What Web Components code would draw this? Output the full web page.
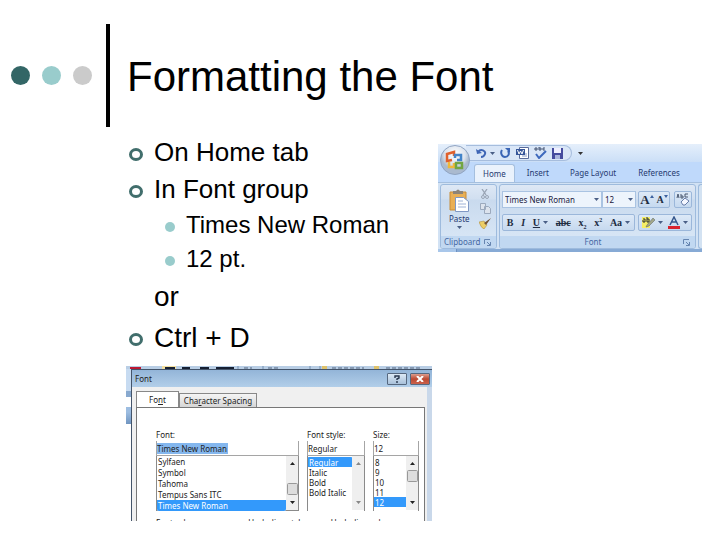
<!DOCTYPE html>
<html lang="en">
<head>
<meta charset="utf-8">
<meta name="viewport" content="width=device-width, initial-scale=1">
<title>Formatting the Font</title>
<style>
	body {
		margin: 0;
		background: #fff;
		color: #000;
		font-family: "Liberation Sans", Arial, sans-serif;
	}
	main {
		display: grid;
		grid-template-columns: 306fr 264fr;
		gap: 6px;
		align-items: start;
		padding: 7px 18px 16px 126px;
	}
	font-ribbon {
		margin-top: 10px;
	}
	font-dialog {
		margin-top: 8px;
	}
</style>
</head>
<body>
<slide-title>Formatting the Font</slide-title>
<main>
	<div>
		<outline-item>On Home tab</outline-item>
		<outline-item>In Font group</outline-item>
		<outline-item level="2">Times New Roman</outline-item>
		<outline-item level="2">12 pt.</outline-item>
		<outline-item level="large" plain>or</outline-item>
		<outline-item level="large">Ctrl + D</outline-item>
		<font-dialog>
			<list-field slot="fields" label="Font:" value="Times New Roman" options="Sylfaen|Symbol|Tahoma|Tempus Sans ITC|Times New Roman" selected="Times New Roman" thumb="27" highlight row="11"></list-field>
			<list-field slot="fields" label="Font style:" value="Regular" options="Regular|Italic|Bold|Bold Italic" selected="Regular" row="10"></list-field>
			<list-field slot="fields" label="Size:" value="12" options="8|9|10|11|12" selected="12" thumb="14" row="10"></list-field>
		</font-dialog>
	</div>
	<font-ribbon></font-ribbon>
</main>

<script>
const attach = (el, css, html) => {
	const template = document.createElement("template");
	template.innerHTML = `<style>* { box-sizing: border-box; } ${css}</style>${html}`;
	el.attachShadow({ mode: "open" }).appendChild(template.content.cloneNode(true));
};

const arrow = (color = "#4a5f86") => `<svg width="5" height="3" viewBox="0 0 5 3" aria-hidden="true"><path d="M0 0h5L2.500 3z" fill="${color}"/></svg>`;

customElements.define("slide-title", class extends HTMLElement {
	constructor() {
		super();
		attach(this, /*css*/ `
			:host {
				display: flex;
				align-items: center;
				padding: 24px 18px 0 11px;
			}
			.dots {
				display: flex;
				gap: 12px;
				width: 95px;
			}
			i {
				width: 19px;
				height: 19px;
				border-radius: 50%;
				background: #336666;
			}
			i:nth-child(2) { background: #99cccc; }
			i:nth-child(3) { background: #cbcbcb; }
			h1 {
				flex: 1;
				margin: 0;
				padding: 29px 0 26px 17px;
				border-left: 4px solid #000;
				font-size: 42px;
				font-weight: normal;
				line-height: 48px;
			}
		`, /*html*/ `
			<div class="dots"><i></i><i></i><i></i></div>
			<h1><slot></slot></h1>
		`);
	}
});

customElements.define("outline-item", class extends HTMLElement {
	constructor() {
		super();
		attach(this, /*css*/ `
			:host {
				display: flex;
				align-items: center;
				padding-left: 3px;
				font-size: 26px;
				line-height: 37px;
			}
			:host([level="2"]) {
				padding-left: 39px;
				font-size: 24px;
				line-height: 34px;
			}
			:host([level="large"]) {
				font-size: 28px;
				line-height: 41px;
			}
			i {
				width: 14px;
				height: 13px;
				margin: 3px 11px 0 0;
				border: 3px solid #416e6c;
				border-radius: 50%;
			}
			:host([level="2"]) i {
				width: 10px;
				height: 10px;
				border: 0;
				background: #99cccc;
			}
			:host([plain]) i { visibility: hidden; }
		`, `<i></i><span><slot></slot></span>`);
	}
});

/* editable value on top, list of choices below */
customElements.define("list-field", class extends HTMLElement {
	connectedCallback() {
		const label = this.getAttribute("label");
		const selected = this.getAttribute("selected");
		const options = this.getAttribute("options").split("|");
		const thumb = this.getAttribute("thumb");
		attach(this, /*css*/ `
			:host {
				display: block;
				min-width: 0;
			}
			label {
				display: block;
				line-height: 12px;
			}
			input {
				display: block;
				width: 100%;
				height: 15px;
				padding: 0;
				border: solid #a5a5a5;
				border-width: 0 1px 1px;
				font: inherit;
				color: inherit;
				background: #fff;
			}
			:host([highlight]) input {
				background: linear-gradient(#84b7ee, #84b7ee) no-repeat 0 2px / 71px 11px;
			}
			.list {
				display: flex;
				height: 55px;
				border: solid #8a8a8a;
				border-width: 0 1px;
			}
			:host([highlight]) .list { border-bottom-width: 1px; }
			select {
				flex: 1;
				min-width: 0;
				height: 55px;
				padding: 1px 0 0;
				border: 0;
				outline: 0;
				background: #fff;
				font: inherit;
				overflow: hidden;
			}
			option {
				min-height: 0;
				height: ${this.getAttribute("row")}px;
				padding: 0 0 0 1px;
				line-height: ${this.getAttribute("row")}px;
				color: #222;
			}
			option:checked {
				background: linear-gradient(#3399fb, #3399fb);
				-webkit-text-fill-color: #fff;
			}
			svg { display: block; flex: none; }
		`, /*html*/ `
			<label for="value">${label}</label>
			<input id="value" value="${this.getAttribute("value")}">
			<div class="list">
				<select size="5" aria-label="${label}">
					${options.map(o => `<option${o === selected ? " selected" : ""}>${o}</option>`).join("")}
				</select>
				<svg width="12" height="54" aria-hidden="true">
					<rect width="12" height="54" fill="#efefef"/>
					<path d="M4 9h5L6.500 6zM4 45h5L6.500 48z" fill="${thumb ? "#222" : "#888"}"/>
					${thumb ? `<rect x="1.500" y="${thumb}.500" width="10" height="11" rx="1" fill="#ddd" stroke="#999"/>` : ""}
				</svg>
			</div>
		`);
	}
});

customElements.define("font-dialog", class extends HTMLElement {
	constructor() {
		super();
		attach(this, /*css*/ `
			:host {
				display: grid;
				grid-template-columns: 5px 1fr;
				overflow: hidden;
				font: 8px/10px "Noto Sans", Tahoma, sans-serif;
				color: #222;
			}
			.strip {
				grid-column: 1 / 3;
				display: block;
				width: 100%;
				height: 3px;
			}
			.side {
				height: 55px;
				background: linear-gradient(#c7dbf1 0 22px, #88a9cf 22px 28px, #fff 28px 38px, #9dbde1 38px 43px, #7095c0);
			}
			.window {
				border: solid #44546a;
				border-width: 1px 0 0 1px;
				background: #f0f0f0;
			}
			header {
				display: flex;
				align-items: center;
				gap: 3px;
				height: 17px;
				padding: 0 2px 0 3px;
				background: linear-gradient(#93b5d8, #b2cee9);
			}
			h2 {
				flex: 1;
				margin: 0;
				font: inherit;
			}
			header button {
				width: 20px;
				height: 12px;
				padding: 0;
				border: 1px solid #56687f;
				border-radius: 1px;
				background: linear-gradient(#dce9f5, #a9c1da);
			}
			header .close { background: linear-gradient(#dc9d8e, #bd4932 50%, #c9614c); }
			header svg { display: block; margin: auto; }
			.inner {
				margin-right: 7px;
				box-shadow: 2px 0 #f0f0f0, 7px 0 #c9d8ea;
			}
			nav {
				display: flex;
				align-items: flex-end;
				height: 20px;
				padding-left: 4px;
			}
			nav button {
				height: 14px;
				padding: 0 4px;
				border: 1px solid #888;
				border-bottom: 0;
				background: linear-gradient(#f5f5f5, #d6d6d6);
				font: inherit;
				color: inherit;
				white-space: nowrap;
			}
			nav .current {
				height: 16px;
				padding: 0 12px;
				background: #fff;
			}
			.panel {
				margin-left: 4px;
				padding: 21px 5px 0 19px;
				border: solid #777;
				border-width: 1px 1px 0;
				background: #fff;
			}
			.fields {
				display: grid;
				grid-template-columns: 143fr 58fr 46fr;
				gap: 8px;
			}
			.more {
				display: grid;
				grid-template-columns: 92fr 82fr 88fr;
				height: 3px;
				margin-top: 7px;
				overflow: hidden;
				white-space: nowrap;
			}
		`, /*html*/ `
			<svg class="strip" viewBox="0 0 306 3" preserveAspectRatio="none" aria-hidden="true">
				<path d="M0 0h306v3H0z" fill="#b9cee5"/>
				<path d="M4 1h11v2H4z" fill="#bd1832"/>
				<path d="M36 0h14v3H36z" fill="#f2dfa0"/>
				<path d="M39 2h10M56 2h8M74 2h9M90 2h18" stroke="#172033" stroke-width="2"/>
				<path d="M112 0v3M137 0v3M184 0v3M194 0v3" stroke="#7590b1"/>
				<path d="M118 2h8M142 2h10M206 2h32M260 2h36" stroke="#53657f" stroke-dasharray="4 2"/>
				<path d="M196 0h5v3h-5zM248 0h5v3h-5z" fill="#dfc26a"/>
			</svg>
			<div class="side"></div>
			<section class="window">
				<header>
					<h2>Font</h2>
					<button aria-label="Help"><svg width="8" height="8" viewBox="0 0 8 8"><path d="M2 3V1h4v2L4 4v1M4 6v2" fill="none" stroke="#27364d" stroke-width="1.400"/></svg></button>
					<button class="close" aria-label="Close"><svg width="8" height="6" viewBox="0 0 8 6"><path d="M1 0l6 6M7 0L1 6" stroke="#fff" stroke-width="2"/></svg></button>
				</header>
				<div class="inner">
					<nav>
						<button class="current">Fo<u>n</u>t</button>
						<button>Cha<u>r</u>acter Spacing</button>
					</nav>
					<div class="panel">
						<div class="fields"><slot name="fields"></slot></div>
						<div class="more"><span>Font color:</span><span>Underline style:</span><span>Underline color:</span></div>
					</div>
				</div>
			</section>
		`);
	}
});

customElements.define("ribbon-group", class extends HTMLElement {
	constructor() {
		super();
		attach(this, /*css*/ `
			:host {
				display: flex;
				flex-direction: column;
				height: 65px;
				border: 1px solid #9ebbdd;
				border-radius: 3px;
				background: linear-gradient(#dee8f5, #d1dff0 14px, #c9daee 15px, #dbe9f7);
				overflow: hidden;
			}
			.content { flex: 1; }
			footer {
				display: flex;
				align-items: center;
				height: 12px;
				padding: 0 5px 0 3px;
				background: #c1d8f1;
				color: #4668a3;
				line-height: 12px;
			}
			span { flex: 1; }
			:host([centered]) span { text-align: center; }
			button {
				display: flex;
				padding: 0;
				border: 0;
				background: none;
			}
		`, /*html*/ `
			<div class="content"><slot></slot></div>
			<footer>
				<span>${this.getAttribute("label")}</span>
				<button aria-label="Open"><svg width="7" height="7" viewBox="0 0 7 7"><path d="M.5 5V.5H6M3 3l3 3M6.500 3v3.500H3" fill="none" stroke="#6685b0"/></svg></button>
			</footer>
		`);
	}
});

customElements.define("font-ribbon", class extends HTMLElement {
	constructor() {
		super();
		attach(this, /*css*/ `
			:host {
				display: block;
				position: relative;
				height: 108px;
				overflow: hidden;
				background: #bfd9fb;
				font: 8px/10px "Noto Sans", "Segoe UI", sans-serif;
				color: #263a70;
			}
			button {
				display: inline-flex;
				align-items: center;
				justify-content: center;
				gap: 3px;
				padding: 0;
				border: 0;
				background: none;
				font: inherit;
				color: inherit;
			}
			svg { flex: none; }
			.office {
				position: absolute;
				left: 2px;
				top: 1px;
			}
			.title {
				display: flex;
				align-items: center;
				gap: 6px;
				height: 18px;
				padding-left: 28px;
				background: linear-gradient(#e5effb, #cbdff7);
			}
			.quick {
				display: flex;
				align-items: center;
				gap: 5px;
				height: 16px;
				padding: 0 8px 0 10px;
				border: 1px solid #a6bddd;
				border-left: 0;
				border-radius: 0 8px 8px 0;
				background: #d9e6f7;
			}
			nav {
				display: flex;
				align-items: flex-end;
				gap: 4px;
				height: 20px;
				padding-left: 36px;
			}
			nav button {
				height: 18px;
				padding: 0 8px;
			}
			nav .wide { padding: 0 9px; }
			nav .current {
				border: 1px solid #a5bfde;
				border-bottom: 0;
				border-radius: 3px 3px 0 0;
				background: #eaf2fc;
			}
			.groups {
				display: grid;
				grid-template-columns: 57px 1fr 4px;
				gap: 2px;
				height: 67px;
				padding: 1px 0 1px 2px;
				border-top: 1px solid #a5bfde;
				background: #d2e2f4;
			}
			.next {
				border: 1px solid #9ebbdd;
				border-right: 0;
				border-radius: 3px 0 0 3px;
				background: #d3e2f2;
			}
			.bottom {
				height: 3px;
				background: linear-gradient(90deg, #a9c7ea 18px, #6e92c3 18px 19px, #87aad5 19px);
			}
			.clipboard {
				display: flex;
				justify-content: space-between;
				padding: 4px 5px 0 8px;
			}
			.paste {
				flex-direction: column;
				gap: 2px;
			}
			.tools {
				display: flex;
				flex-direction: column;
				justify-content: space-between;
			}
			.row {
				display: flex;
				justify-content: space-between;
				padding: 6px 3px 0 2px;
			}
			.combo {
				display: flex;
				align-items: center;
				height: 17px;
				padding-right: 2px;
				border: 1px solid #a9c3e2;
				background: #edf4fc;
			}
			.name { flex: 1; }
			.size { width: 34px; }
			select {
				flex: 1;
				min-width: 0;
				width: 0;
				padding: 0 0 0 2px;
				border: 0;
				appearance: none;
				background: none;
				font: inherit;
				color: #20203c;
			}
			.set {
				display: flex;
				align-items: center;
				justify-content: space-around;
				height: 17px;
				border: 1px solid #9bb7da;
				border-radius: 2px;
				background: linear-gradient(#dde9f7, #c6d9ef);
			}
			.set button {
				height: 15px;
				font-family: "Liberation Serif", serif;
				font-size: 10px;
				font-weight: bold;
				color: #222d42;
			}
			.set .big { font-size: 13px; }
			.grow {
				width: 32px;
				margin: 0 4px 0 2px;
			}
			.clear { width: 18px; }
			.styles {
				flex: 1;
				margin-right: 3px;
			}
			.colors { width: 54px; }
			sub, sup { font-size: 6px; line-height: 0; }
			.tight { gap: 0; }
		`, /*html*/ `
			<div class="title">
				<div class="quick">
					<button aria-label="Undo"><svg width="11" height="10" viewBox="0 0 11 10"><path d="M2 4c3-4 8-1 7 2S6 9 5 9" fill="none" stroke="#3e65b5" stroke-width="2"/><path d="M0 1l1 5 5-1z" fill="#3e65b5"/></svg>${arrow()}</button>
					<button aria-label="Repeat"><svg width="11" height="10" viewBox="0 0 11 10"><path d="M2 2C0 5 2 9 5 9s5-3 3-6" fill="none" stroke="#3a65b5" stroke-width="2"/><path d="M5 0h5v5z" fill="#3a65b5"/></svg></button>
					<button aria-label="Word document"><svg width="13" height="12" viewBox="0 0 13 12"><path d="M3.500.500h9v11h-9z" fill="#fff" stroke="#596b9b"/><path d="M6 7h5M6 9h5" stroke="#889ac4"/><path d="M0 2h9v6H0z" fill="#355599"/><path d="M1.500 3l1.500 4 1.500-3L6 7l1.500-4" fill="none" stroke="#fff"/></svg></button>
					<button aria-label="Spelling"><svg width="13" height="12" viewBox="0 0 13 12"><path d="M1 3V1h2v2zM5 0v3h2V1H5M11 1H9v2h2" fill="none" stroke="#405071"/><path d="M2 7l3 4 7-7" fill="none" stroke="#3e69bd" stroke-width="2"/></svg></button>
					<button aria-label="Save"><svg width="11" height="11" viewBox="0 0 11 11"><path d="M0 0h11v11H0z" fill="#454b9e"/><path d="M2 0h7v5H2z" fill="#eef"/><path d="M3 7h5v4H3z" fill="#aab5dd"/></svg></button>
				</div>
				<button aria-label="Customize">${arrow("#333")}</button>
			</div>
			<nav>
				<button class="current">Home</button>
				<button>Insert</button>
				<button class="wide">Page Layout</button>
				<button class="wide">References</button>
			</nav>
			<div class="groups">
				<ribbon-group label="Clipboard">
					<div class="clipboard">
						<button class="paste">
							<svg width="20" height="23" viewBox="0 0 20 23"><path d="M1 3h16v18H1z" fill="#e9af55" stroke="#c78c38"/><path d="M4 5V2h3q2-3 4 0h3v3z" fill="#8d8478"/><path d="M6.500 8.500h8l5 4v10h-13z" fill="#fff" stroke="#8098c4"/><path d="M9 12h5M9 15h8M9 18h8" stroke="#9fb2d6"/></svg>
							<span>Paste</span>
							${arrow()}
						</button>
						<div class="tools">
							<button aria-label="Cut"><svg width="10" height="10" viewBox="0 0 10 10"><path d="M2 0l4 6M7 0L3 6" stroke="#99a4b4" stroke-width="1.300"/><circle cx="3" cy="8" r="1.500" fill="none" stroke="#99a4b4"/><circle cx="7" cy="8" r="1.500" fill="none" stroke="#99a4b4"/></svg></button>
							<button aria-label="Copy"><svg width="11" height="11" viewBox="0 0 11 11"><path d="M.5.5h5v6h-5zM4.500 3.500h4l2 2v5h-6z" fill="#dce3ed" stroke="#9ba9bd"/></svg></button>
							<button aria-label="Format Painter"><svg width="12" height="11" viewBox="0 0 12 11"><path d="M0 4l5-1 3 4-3 4q-3-1-5-7z" fill="#ecce66" stroke="#a78335" stroke-width=".5"/><path d="M5 5l2 2 5-7z" fill="#725336"/></svg></button>
						</div>
					</div>
				</ribbon-group>
				<ribbon-group label="Font" centered>
					<div class="row">
						<div class="combo name"><select aria-label="Font"><option>Times New Roman</option></select>${arrow()}</div>
						<div class="combo size"><select aria-label="Font size"><option>12</option></select>${arrow()}</div>
						<div class="set grow">
							<button class="big tight" aria-label="Grow Font">A<svg width="4" height="10" viewBox="0 0 4 10"><path d="M0 3h4L2 0z" fill="#3c61a0"/></svg></button>
							<button class="tight" aria-label="Shrink Font">A<svg width="4" height="10" viewBox="0 0 4 10"><path d="M0 0h4L2 3z" fill="#3c61a0"/></svg></button>
						</div>
						<div class="set clear">
							<button aria-label="Clear Formatting"><svg width="14" height="13" viewBox="0 0 14 13"><path d="M1 5l1-4 1 4M5 1v4h2V3H5M12 1H9v3h3" fill="none" stroke="#4b5971"/><path d="M5 9l4-4 4 3-4 4H7z" fill="#f5f7ff" stroke="#687da8"/></svg></button>
						</div>
					</div>
					<div class="row">
						<div class="set styles">
							<button>B</button>
							<button><i>I</i></button>
							<button><u>U</u>${arrow()}</button>
							<button><s>abc</s></button>
							<button><span>x<sub>2</sub></span></button>
							<button><span>x<sup>2</sup></span></button>
							<button>Aa${arrow()}</button>
						</div>
						<div class="set colors">
							<button aria-label="Highlight"><svg width="13" height="13" viewBox="0 0 13 13"><path d="M0 1h8v11H0z" fill="#f5ee65"/><path d="M1 3h2v3H1v-2M5 1v5h2V3H5" fill="none" stroke="#242b33"/><path d="M5 9l6-7 2 2-6 6-3 1z" fill="#a3a78a" stroke="#58605c" stroke-width=".5"/></svg>${arrow()}</button>
							<button aria-label="Font Color"><svg width="12" height="13" viewBox="0 0 12 13"><path d="M2 9l4-8 4 8M4 6h4" fill="none" stroke="#36588d" stroke-width="1.500"/><path d="M0 10h12v3H0z" fill="#d9232e"/></svg>${arrow()}</button>
						</div>
					</div>
				</ribbon-group>
				<div class="next"></div>
			</div>
			<div class="bottom"></div>
			<button class="office" aria-label="Office Button">
				<svg width="30" height="30" viewBox="0 0 30 30">
					<defs><radialGradient id="orb" cy=".3"><stop stop-color="#fff"/><stop offset=".7" stop-color="#dce3ed"/><stop offset="1" stop-color="#aabacf"/></radialGradient></defs>
					<circle cx="15" cy="15" r="14.500" fill="url(#orb)" stroke="#90a4c2"/>
					<g fill="none" stroke-width="2.500">
						<path d="M14 11V7L7 9v7l5-1" stroke="#df602c"/>
						<path d="M15 13v-3h6v5h-4" stroke="#4384c9"/>
						<path d="M9 17v5h5v-4" stroke="#eeb83a"/>
						<path d="M16 18h6v5h-6z" stroke="#72a541"/>
					</g>
				</svg>
			</button>
		`);
	}
});
</script>
</body>
</html>
